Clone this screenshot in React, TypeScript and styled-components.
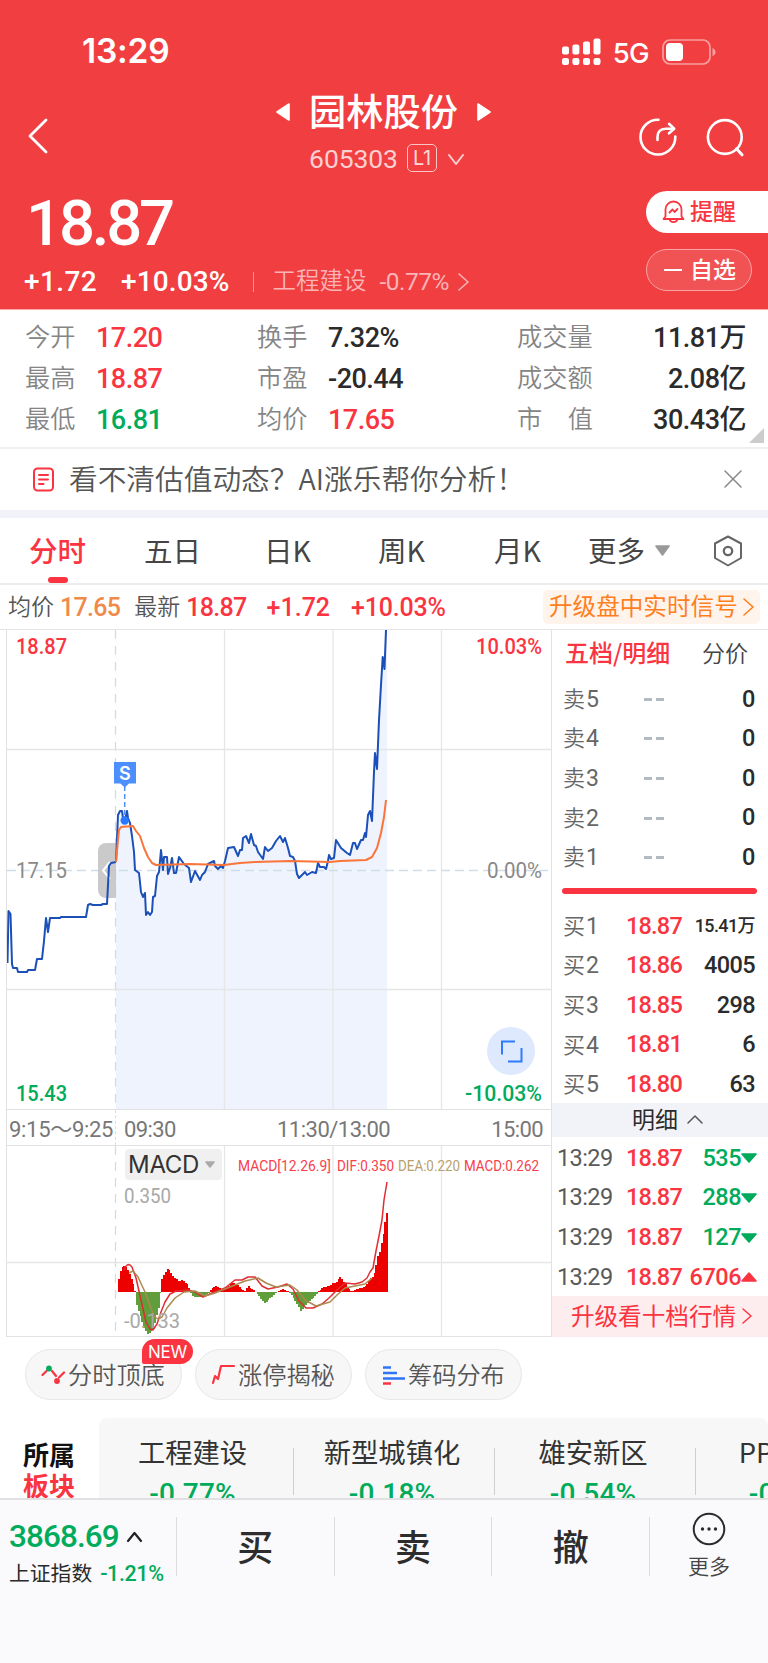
import React from "react";
import styled, { createGlobalStyle } from "styled-components";

const RED = "#fa3441";
const GREEN = "#00ab5b";
const CJK = '"Noto Sans CJK SC", sans-serif';
const DIN = 'Roboto, "Noto Sans CJK SC", sans-serif';

const GlobalStyle = createGlobalStyle`
  *, *::before, *::after { box-sizing: border-box; }
  body { margin: 0; background: #fff; font-family: ${CJK}; }
  svg { display: block; flex: none; }
`;

const Page = styled.div`
  width: 768px;
  height: 1663px;
  overflow: hidden;
  display: flex;
  flex-direction: column;
  background: #fff;
  color: #2b2b2b;
`;

interface TextProps {
  $size: number;
  $color?: string;
  $weight?: number;
  $track?: number;
  $ml?: number;
  $lift?: number;
}

const Num = styled.span<TextProps>`
  font-family: ${DIN};
  font-size: ${(p) => p.$size}px;
  font-weight: ${(p) => p.$weight ?? 500};
  color: ${(p) => p.$color ?? "inherit"};
  letter-spacing: ${(p) => p.$track ?? -0.3}px;
  margin: ${(p) => -(p.$lift ?? 0)}px 0 0 ${(p) => p.$ml ?? 0}px;
  line-height: 1;
  white-space: nowrap;
`;

const Txt = styled.span<TextProps>`
  font-family: ${CJK};
  font-size: ${(p) => p.$size}px;
  font-weight: ${(p) => p.$weight ?? 400};
  color: ${(p) => p.$color ?? "inherit"};
  letter-spacing: ${(p) => p.$track ?? 0}px;
  margin: ${(p) => -(p.$lift ?? 3)}px 0 0 ${(p) => p.$ml ?? 0}px;
  line-height: 1;
  white-space: nowrap;
`;

/* ---------- header ---------- */

const Header = styled.header`
  height: 310px;
  flex: none;
  background: #f03e41;
  border-bottom: 1px solid #f9a9aa;
  color: #fff;
  display: flex;
  flex-direction: column;
`;

const StatusBar = styled.div`
  height: 86px;
  padding: 18px 52px 0 82px;
  display: flex;
  align-items: center;
  font-family: Inter, sans-serif;
`;

const Clock = styled.span`
  font-size: 33.5px;
  font-weight: 600;
  letter-spacing: -0.2px;
  line-height: 1;
  flex: 1;
`;

const Network = styled.span`
  font-size: 27.5px;
  font-weight: 500;
  letter-spacing: -0.6px;
  line-height: 1;
  margin: 3px 13px 0 12px;
`;

const NavBar = styled.div`
  height: 94px;
  padding: 0 24px 0 28px;
  display: flex;
  align-items: flex-start;
`;

const NavSide = styled.div<{ $end?: boolean }>`
  width: 140px;
  padding-top: 32px;
  display: flex;
  gap: 29px;
  justify-content: ${(p) => (p.$end ? "flex-end" : "flex-start")};
`;

const TitleBlock = styled.div`
  flex: 1;
  display: flex;
  flex-direction: column;
  align-items: center;
`;

const TitleRow = styled.div`
  height: 52px;
  margin-left: -5px;
  display: flex;
  align-items: center;
  gap: 19px;
  font-size: 37.2px;
  font-weight: 500;
  line-height: 1;
`;

const TitleText = styled.span`
  margin: -2px 0 0 0;
`;

const CodeRow = styled.div`
  height: 42px;
  padding-left: 2px;
  display: flex;
  align-items: center;
`;

const LevelTag = styled.span`
  width: 30px;
  height: 28px;
  margin: -2px 10px 0 9px;
  border: 1px solid #fbc5c6;
  border-radius: 5px;
  display: flex;
  align-items: center;
  justify-content: center;
  color: #fdd8d9;
  font-family: Inter, sans-serif;
  font-size: 20px;
  letter-spacing: -0.5px;
`;

const QuoteBlock = styled.div`
  flex: 1;
  display: flex;
  justify-content: space-between;
`;

const PriceColumn = styled.div`
  display: flex;
  flex-direction: column;
  padding-left: 24px;
`;

const PriceRow = styled.div`
  height: 79px;
  display: flex;
  align-items: center;
  padding: 9px 0 0 2px;
`;

const ChangeRow = styled.div`
  height: 46px;
  display: flex;
  align-items: center;
`;

const Divider = styled.i`
  width: 1px;
  height: 20px;
  margin-left: 24px;
  background: #f79496;
`;

const ArrowSlot = styled.span<{ $gap: number }>`
  margin-left: ${(p) => p.$gap}px;
`;

const Actions = styled.div`
  width: 122px;
  padding-top: 11px;
  display: flex;
  flex-direction: column;
  gap: 16px;
`;

const RemindButton = styled.button`
  height: 42px;
  padding: 0 0 0 16px;
  border: 0;
  border-radius: 21px 0 0 21px;
  background: #fff;
  display: flex;
  align-items: center;
  gap: 5px;
`;

const WatchButton = styled.button`
  width: 106px;
  height: 42px;
  padding: 0 0 0 17px;
  border: 1px solid #f8a3a5;
  border-radius: 21px;
  background: #f15254;
  display: flex;
  align-items: center;
  gap: 8px;
`;

/* ---------- key figures ---------- */

const Figures = styled.section`
  height: 139px;
  flex: none;
  position: relative;
  padding: 6px 22px 0 25px;
  border-bottom: 2px solid #efefef;
  display: grid;
  grid-template-columns: 232px 260px 1fr;
  grid-auto-rows: 41.4px;
`;

const Figure = styled.div<{ $spread?: boolean }>`
  display: flex;
  align-items: center;
  justify-content: ${(p) => (p.$spread ? "space-between" : "flex-start")};
`;

const FigureLabel = styled.span<{ $wide?: boolean }>`
  display: flex;
  justify-content: space-between;
  width: ${(p) => (p.$wide ? "76px" : "71px")};
  font-size: 25.2px;
  font-weight: 350;
  line-height: 1;
  color: #858585;
  margin-top: -3px;
`;

const FoldCorner = styled.i`
  position: absolute;
  right: 4px;
  bottom: 4px;
  border-left: 15px solid transparent;
  border-bottom: 15px solid #ccc;
`;

/* ---------- banner and tabs ---------- */

const Banner = styled.section`
  height: 61px;
  flex: none;
  padding: 0 26px 0 33px;
  display: flex;
  align-items: center;
`;

const CloseButton = styled.button`
  margin: -1px 0 0 auto;
  padding: 0;
  border: 0;
  background: none;
`;

const Gap = styled.div`
  height: 8px;
  flex: none;
  background: #f2f3f9;
`;

const Tabs = styled.nav`
  height: 67px;
  flex: none;
  border-bottom: 2px solid #ececec;
  padding: 0 24px 0 29px;
  display: flex;
`;

const Tab = styled.div<{ $w: number; $active?: boolean }>`
  width: ${(p) => p.$w}px;
  height: 65px;
  position: relative;
  display: flex;
  align-items: center;
  gap: 10px;
  font-size: 28.5px;
  line-height: 1;
  font-weight: ${(p) => (p.$active ? 500 : 400)};
  color: ${(p) => (p.$active ? RED : "#454545")};
  ${(p) =>
    p.$active &&
    `&::after { content: ""; position: absolute; left: 19px; bottom: 0; width: 20px; height: 6px; border-radius: 3px; background: ${RED}; }`}
`;

const InfoRow = styled.div`
  height: 44px;
  flex: none;
  padding: 0 8px 0 8px;
  display: flex;
  align-items: center;
`;

const SignalLink = styled.a`
  margin-left: auto;
  width: 217px;
  height: 34px;
  margin-top: -1px;
  padding-left: 6px;
  border-radius: 5px;
  background: #fff4eb;
  display: flex;
  align-items: center;
  gap: 4px;
`;

/* ---------- charts and book ---------- */

const Main = styled.section`
  height: 708px;
  flex: none;
  display: flex;
  border-top: 1px solid #e4e4e4;
`;

const Charts = styled.div`
  width: 546px;
  margin-left: 6px;
  display: flex;
  flex-direction: column;
  border: 1px solid #e2e2e2;
  border-top: 0;
`;

const Plot = styled.div<{ $h: number }>`
  position: relative;
  height: ${(p) => p.$h}px;
`;

const ExpandButton = styled.button`
  position: absolute;
  right: 16px;
  top: 397px;
  width: 48px;
  height: 48px;
  padding: 0;
  border: 0;
  border-radius: 50%;
  background: #dfe9fd;
  display: flex;
  align-items: center;
  justify-content: center;
`;

const TimeAxis = styled.div`
  height: 37px;
  border-top: 1px solid #e2e2e2;
  border-bottom: 1px solid #e2e2e2;
  display: grid;
  grid-template-columns: 109px 153px 1fr 80px;
  align-items: center;
`;

const TimeLabel = styled(Num)<{ $align?: string; $first?: boolean }>`
  text-align: ${(p) => p.$align ?? "left"};
  height: 35px;
  line-height: 37px;
  padding: 1px 8px 0 ${(p) => (p.$first ? "2px" : "8px")};
  ${(p) => p.$first && "border-right: 1px dashed #dcdcdc; padding-right: 0;"}
`;

const MacdHeader = styled.div`
  position: absolute;
  left: 118px;
  top: 3px;
  height: 31px;
  display: flex;
  align-items: center;
`;

const Selector = styled.span`
  width: 97px;
  height: 31px;
  padding-left: 3px;
  border-radius: 4px;
  background: #f0f0f0;
  display: flex;
  align-items: center;
  gap: 6px;
  font-family: Inter, sans-serif;
  font-size: 24px;
  letter-spacing: -0.3px;
  color: #333;
`;

const Book = styled.div`
  flex: 1;
  display: flex;
  flex-direction: column;
`;

const BookTabs = styled.div`
  height: 49px;
  padding: 0 20px 0 13px;
  display: flex;
  align-items: center;
  justify-content: space-between;
`;

const BookRow = styled.div`
  height: 39.6px;
  padding: 1px 13px 0 12px;
  display: grid;
  grid-template-columns: 62px 56px 1fr;
  align-items: center;
`;

const BookLabel = styled.span`
  font-size: 22px;
  font-weight: 350;
  line-height: 1;
  color: #666;
  margin: -2px 0 0 -1px;
  & b { font: 400 23px/1 ${DIN}; margin-left: 1px; }
`;

const Quantity = styled(Num)`
  text-align: right;
`;

const Dashes = styled.span`
  display: flex;
  justify-content: center;
  gap: 4px;
  padding-right: 1px;
  &::before, &::after { content: ""; width: 8px; height: 3px; background: #b3bac4; }
`;

const SplitBar = styled.div`
  height: 6px;
  margin: 11px 11px 12px 10px;
  border-radius: 3px;
  background: ${RED};
`;

const DetailBar = styled.div`
  height: 34px;
  margin-top: -1px;
  padding-left: 16px;
  background: #f2f3f9;
  display: flex;
  align-items: center;
  justify-content: center;
  gap: 8px;
`;

const TradeRow = styled.div`
  height: 39.7px;
  padding: 3px 11px 0 5px;
  display: grid;
  grid-template-columns: 69px 56px 1fr 16px;
  align-items: center;
`;

const UpgradeLink = styled.a`
  height: 41px;
  padding-left: 4px;
  background: #feedef;
  display: flex;
  align-items: center;
  justify-content: center;
  gap: 5px;
`;

/* ---------- lower area ---------- */

const Chips = styled.div`
  height: 81px;
  flex: none;
  padding: 12px 25px 0;
  display: flex;
  gap: 13px;
`;

const Chip = styled.button`
  position: relative;
  width: 157px;
  height: 51px;
  padding: 0 0 0 15px;
  border: 1px solid #e7e7e7;
  border-radius: 26px;
  background: #f7f7f7;
  display: flex;
  align-items: center;
  gap: 2px;
`;

const NewBadge = styled.span`
  position: absolute;
  left: 116px;
  top: -11px;
  width: 51px;
  height: 25px;
  border-radius: 13px 13px 13px 2px;
  background: ${RED};
  color: #fff;
  font: 400 17px/27px Inter, sans-serif;
  letter-spacing: -0.3px;
  text-align: center;
`;

const Sectors = styled.section`
  height: 80px;
  flex: none;
  overflow: hidden;
  display: flex;
`;

const SectorTitle = styled.div`
  width: 99px;
  padding: 21px 0 0 23px;
  font-size: 26px;
  line-height: 30.5px;
  font-weight: 700;
  color: #111;
  flex: none;
  & em { display: block; font-style: normal; color: ${RED}; }
`;

const SectorStrip = styled.div`
  flex: 1;
  overflow: hidden;
  height: 110px;
  background: #f7f7f7;
  border-radius: 8px;
  display: flex;
`;

const Sector = styled.div`
  width: 201px;
  flex: none;
  position: relative;
  padding: 23px 5px 0 0;
  display: flex;
  flex-direction: column;
  align-items: center;
  gap: 15px;
  &:first-child { width: 195px; padding-right: 8px; }
  &:last-child { padding-right: 9px; }
  &::after { content: ""; position: absolute; right: 0; top: 30px; width: 1px; height: 47px; background: #cfcfcf; }
`;

const Footer = styled.footer`
  flex: 1;
  border-top: 2px solid #e1e1e4;
  background: #fafafc;
  display: flex;
  align-items: flex-start;
`;

const IndexBlock = styled.div`
  width: 176px;
  padding: 21px 0 0 9px;
  display: flex;
  flex-direction: column;
  gap: 10px;
`;

const Inline = styled.div`
  display: flex;
  align-items: center;
`;

const Trade = styled.button`
  width: 157.7px;
  height: 59px;
  margin-top: 17px;
  padding: 0 0 4px;
  border: 0;
  border-left: 1px solid #dcdce0;
  background: none;
  color: #2d2d2d;
  font: 500 36px/1 ${CJK};
`;

const More = styled.div`
  flex: 1;
  height: 59px;
  margin-top: 17px;
  border-left: 1px solid #dcdce0;
  display: flex;
  flex-direction: column;
  align-items: center;
  gap: 12px;
`;

const MoreIcon = styled.svg`
  margin-top: -5px;
`;

/* ---------- drawings ---------- */

type Dir = "left" | "right" | "up" | "down";

const Chevron = ({ w, h, dir, color, sw = 2 }: { w: number; h: number; dir: Dir; color: string; sw?: number }) => {
  const pts: Record<Dir, string> = {
    left: `${w - 2},2 2,${h / 2} ${w - 2},${h - 2}`,
    right: `2,2 ${w - 2},${h / 2} 2,${h - 2}`,
    up: `2,${h - 2} ${w / 2},2 ${w - 2},${h - 2}`,
    down: `2,2 ${w / 2},${h - 2} ${w - 2},2`,
  };
  return (
    <svg width={w} height={h} fill="none" stroke={color} strokeWidth={sw} strokeLinecap="round" strokeLinejoin="round">
      <polyline points={pts[dir]} />
    </svg>
  );
};

const Triangle = ({ w, h, dir, color }: { w: number; h: number; dir: Dir; color: string }) => {
  const pts: Record<Dir, string> = {
    left: `${w - 1},1 1,${h / 2} ${w - 1},${h - 1}`,
    right: `1,1 ${w - 1},${h / 2} 1,${h - 1}`,
    up: `1,${h - 1} ${w / 2},1 ${w - 1},${h - 1}`,
    down: `1,1 ${w / 2},${h - 1} ${w - 1},1`,
  };
  return (
    <svg width={w} height={h} fill={color} stroke={color} strokeWidth={1.6} strokeLinejoin="round">
      <polygon points={pts[dir]} />
    </svg>
  );
};

const Signal = () => (
  <svg width="39" height="28" fill="#fff">
    {[0, 10.4, 21, 31.5].map((x, i) => (
      <g key={x}>
        <rect x={x} y={[8.5, 6.5, 3.5, 0.5][i]} width="7" height={[8, 10, 13, 16][i]} rx="2" />
        <rect x={x} y="20" width="7" height="7" rx="2.2" />
      </g>
    ))}
  </svg>
);

const Battery = () => (
  <svg width="54" height="27" fill="none">
    <rect x="1" y="1" width="47" height="24" rx="7" stroke="#f99fa0" strokeWidth="1.7" />
    <rect x="4" y="4" width="17" height="18" rx="4" fill="#fff" />
    <path d="M50.5 9c4 1.5 4 7 0 8z" fill="#f99fa0" />
  </svg>
);

const ShareIcon = () => (
  <svg width="38" height="38" fill="none" stroke="#fff" strokeWidth="2.6" strokeLinecap="round" strokeLinejoin="round">
    <path d="M19.5 1.7A17.4 17.4 0 1 0 36.3 18.5" />
    <path d="M18.5 22v-3c0-5 3-8.3 8-8.3h8" />
    <path d="M30 5.8l5.2 4.9L30 15.3" />
  </svg>
);

const SearchIcon = () => (
  <svg width="38" height="39" fill="none" stroke="#fff" strokeWidth="2.6" strokeLinecap="round">
    <circle cx="18.8" cy="19" r="16.9" />
    <path d="M30.5 30.8l5.5 6" strokeWidth="3" />
  </svg>
);

const BellIcon = () => (
  <svg width="23" height="24" fill="none" stroke={RED} strokeWidth="1.8" strokeLinecap="round" strokeLinejoin="round">
    <path d="M3.5 16.5V9.5a8 8 0 0 1 16 0v7l2 2.5H1.5z" />
    <path d="M7.5 19.5c1.5 3.5 6.5 3.5 8 0" />
    <path d="M7.5 12.5l3-3 2 2.5 3-3" />
  </svg>
);

const NoteIcon = () => (
  <svg width="21" height="25" fill="none" stroke={RED} strokeWidth="2" strokeLinecap="round">
    <rect x="1" y="1.5" width="19" height="22" rx="3.5" />
    <path d="M6 8h9M6 12.5h9M6 17h4.5" />
  </svg>
);

const CloseIcon = () => (
  <svg width="18" height="18" stroke="#888" strokeWidth="1.5" strokeLinecap="round">
    <path d="M1 1l16 16M17 1L1 17" />
  </svg>
);

const HexIcon = () => (
  <svg width="30" height="32" fill="none" stroke="#666" strokeWidth="2" strokeLinejoin="round">
    <path d="M15 1.5L28 8.5v14.5L15 30.5 2 23V8.5z" />
    <circle cx="15" cy="16" r="4.2" strokeWidth="2.3" />
  </svg>
);

const TopBottomIcon = () => (
  <svg width="25" height="22" fill="none" stroke={RED} strokeWidth="2.2" strokeLinecap="round">
    <path d="M1.5 11l4-4M11 7l4 5M18 13.5l5-5" />
    <circle cx="8" cy="4.5" r="2.9" fill={GREEN} stroke="none" />
    <circle cx="16" cy="17" r="2.9" fill={RED} stroke="none" />
  </svg>
);

const LimitIcon = () => (
  <svg width="25" height="22" fill="none" stroke={RED} strokeWidth="2.2" strokeLinejoin="round" strokeLinecap="round">
    <path d="M2 19l2-7 3 3 3-13h13" />
  </svg>
);

const HoldingsIcon = () => (
  <svg width="25" height="20" strokeWidth="2.5">
    <path d="M2 2.5h8M2 8h14M2 13.5h22" stroke="#2f74f5" />
    <path d="M2 18.5h8" stroke={RED} />
  </svg>
);

/* ---------- chart data ---------- */

const OPENING =
  "7.5,963 8.5,911 10.5,914 12,964 13,968 17,968 18,972 27,972 28,970 35,970 37,959 42,959 44,941 46,918 48,932 50,918 60,918 61,917 86,917 88,905 90,904 93,905 101,905 103,904 107,904 109,866 111,863 116,862";
const PRICE =
  "116,862 118,815 120,811 122,811 123,818 125,820 127,811 128,818 130,823 132,836 134,852 135,870 139,873 141,892 143,897 145,893 146,915 148,912 150,915 152,912 153,897 155,896 157,876 159,872 161,850 163,870 164,857 167,857 168,874 170,868 172,858 174,873 176,873 179,857 184,864 189,868 191,882 195,871 200,880 202,875 205,872 208,864 214,861 215,866 218,869 221,866 223,868 225,861 228,848 234,847 238,856 240,850 242,850 243,838 246,836 249,843 251,834 254,845 256,846 258,852 263,859 265,847 268,851 272,848 276,841 280,836 283,842 285,838 288,848 290,856 293,857 295,861 297,874 299,878 305,872 307,875 312,872 316,873 318,863 320,867 324,867 326,869 328,861 329,855 331,859 334,858 336,840 341,848 347,853 350,855 353,843 355,843 357,849 361,840 363,840 365,833 366,837 368,815 370,811 372,821 374,772 375,753 377,769 379,720 381,685 382.7,657 384.5,669 386,630";
const AVERAGE =
  "116,862 118,840 119,830 121,827 133,826 136,831 140,836 144,848 148,857 152,863 156,865 190,864 224,865 240,863 255,862 290,861 330,862 340,861 366,860 372,857 377,848 381,833 384,817 386,800";
const DIF =
  "124,1270 126,1266 128,1264.5 130,1265 132,1267 136,1278 141,1300 146,1322 150,1329 153,1330 157,1324 161,1312 165,1302 170,1294 176,1291 188,1290 195,1292 203,1297 212,1293 225,1288 235,1280 242,1280 248,1277 255,1277 262,1286 268,1289 278,1287 287,1284 293,1289 299,1301 306,1308 313,1308 322,1304 329,1298 337,1290 345,1283 355,1284 362,1282 367,1278 370,1272 373,1268 376,1251 379,1236 382,1220 384,1200 387,1182";
const DEA =
  "129,1273 133,1271 138,1277 145,1292 152,1311 155,1317 158,1319 162,1317 167,1308 175,1298 184,1292 195,1291 205,1296 215,1293 235,1285 245,1281 258,1278 266,1283 276,1287 290,1285 297,1290 305,1300 316,1306 330,1302 337,1295 345,1288 355,1286 365,1284 372,1278";
const ENVELOPE: [number, number][] = [
  [118, 13], [120, 22], [122, 26], [125, 25], [127, 22], [130, 15], [133, 6], [134.5, 0], [135, -8], [137, -17],
  [140, -25], [143, -36], [147, -42], [150, -40], [153, -36], [155, -26], [158, -14], [159.5, 0], [160, 8], [162, 16],
  [165, 20], [167, 24], [170, 19], [174, 14], [178, 11], [182, 12], [187, 7], [190, 0], [192, -4], [195, -5],
  [205, -4], [208, 0], [211, 4], [216, 6], [222, 2], [226, 5], [231, 9], [236, 8], [240, 3], [244, 1],
  [247, 6], [250, 4], [255, 0], [258, -4], [264, -11], [272, -4], [276, 0], [281, 3], [286, 1], [289, 0],
  [294, -8], [300, -19], [308, -10], [317, -1], [318, 1], [323, 5], [329, 6], [332, 9], [336, 10], [339, 16],
  [344, 9], [348, 3], [351, 0.5], [355, 3], [361, 4], [366, 7], [370, 14], [373, 16], [375, 25], [377, 36],
  [379, 40], [381, 50], [383, 60], [385, 74], [387, 82],
];

const heightAt = (x: number) => {
  const i = ENVELOPE.findIndex(([px]) => px >= x);
  if (i <= 0) return ENVELOPE[0][1];
  const [x0, y0] = ENVELOPE[i - 1];
  const [x1, y1] = ENVELOPE[i];
  return y0 + ((y1 - y0) * (x - x0)) / (x1 - x0);
};

const BARS = Array.from({ length: 150 }, (_, i) => 118 + i * 1.8).map((x) => ({ x, v: heightAt(x) }));

interface AxisTextProps {
  x: number;
  y: number;
  w: number;
  size: number;
  color: string;
  weight?: number;
  children: string;
}

const AxisText = ({ x, y, w, size, color, weight = 400, children }: AxisTextProps) => (
  <text x={x} y={y} fontFamily="Roboto" fontSize={size} fontWeight={weight} fill={color} textLength={w} lengthAdjust="spacingAndGlyphs">
    {children}
  </text>
);

const Grid = ({ top, bottom }: { top: number; bottom: number }) => (
  <g stroke="#e6e6e6" strokeWidth="1.3">
    <line x1="115.5" x2="115.5" y1={top} y2={bottom} strokeDasharray="9 7" stroke="#dadada" />
    {[224.5, 333, 441.5].map((x) => (
      <line key={x} x1={x} x2={x} y1={top} y2={bottom} />
    ))}
  </g>
);

const PriceChart = () => (
  <svg width="544" height="479" viewBox="7 630 544 479">
    <polygon points={`116,1109 ${PRICE} 387,630 387,1109`} fill="#eef3fe" />
    <Grid top={630} bottom={1109} />
    <g stroke="#e6e6e6" strokeWidth="1.3">
      <line x1="7" x2="551" y1="749.5" y2="749.5" />
      <line x1="7" x2="551" y1="989.5" y2="989.5" />
    </g>
    <line x1="7" x2="551" y1="870.5" y2="870.5" stroke="#cfdde8" strokeWidth="1.5" strokeDasharray="9 5" />
    <path d="M116 843h-10a8 8 0 0 0-8 8v39a8 8 0 0 0 8 8h10z" fill="#c4c4c4" opacity="0.9" />
    <polyline points="110,862 103,870.5 110,879" fill="none" stroke="#fff" strokeWidth="2" />
    <g fill="none" strokeWidth="2" strokeLinejoin="round">
      <polyline points={OPENING} stroke="#1a50b8" />
      <polyline points={PRICE} stroke="#1a50b8" />
      <polyline points={AVERAGE} stroke="#fb743a" />
    </g>
    <line x1="124.7" x2="124.7" y1="786" y2="815" stroke="#4d8fff" strokeWidth="1.5" strokeDasharray="5 3" />
    <path d="M114 762h22v21.5h-7l-4.3 4-4.3-4H114z" fill="#4d8fff" />
    <circle cx="124.7" cy="820.5" r="4.2" fill="#2879ff" />
    <text x="124.9" y="779.5" textAnchor="middle" fontFamily="Inter" fontSize="18" fontWeight="600" fill="#fff">S</text>
    <AxisText x={16} y={654} w={51} size={22} color={RED} weight={500}>18.87</AxisText>
    <AxisText x={476} y={654} w={66} size={22} color={RED} weight={500}>10.03%</AxisText>
    <AxisText x={16} y={878} w={51} size={22} color="#8a8a8a">17.15</AxisText>
    <AxisText x={487} y={878} w={55} size={22} color="#8a8a8a">0.00%</AxisText>
    <AxisText x={16} y={1101} w={51} size={22} color={GREEN} weight={500}>15.43</AxisText>
    <AxisText x={465} y={1101} w={77} size={22} color={GREEN} weight={500}>-10.03%</AxisText>
  </svg>
);

const MacdChart = () => (
  <svg width="544" height="190" viewBox="7 1146 544 190">
    <Grid top={1146} bottom={1336} />
    <line x1="7" x2="551" y1="1262.5" y2="1262.5" stroke="#e6e6e6" strokeWidth="1.3" />
    <g shapeRendering="crispEdges">
      {BARS.map(({ x, v }) => (
        <rect key={x} x={x} width="2" y={v > 0 ? 1292 - v : 1292} height={Math.max(Math.abs(v), 0.5)} fill={v > 0 ? "#ec0000" : "#5f9e3a"} />
      ))}
    </g>
    <g fill="none" strokeWidth="1.5" strokeLinejoin="round">
      <polyline points={DIF} stroke="#e02c33" />
      <polyline points={DEA} stroke="#ab8a50" />
    </g>
    <AxisText x={124} y={1202.5} w={47} size={20} color="#a8a8a8">0.350</AxisText>
    <AxisText x={124} y={1328} w={56} size={20} color="#a8a8a8">-0.133</AxisText>
    <AxisText x={238} y={1171} w={93} size={14.5} color="#f8404c">MACD[12.26.9]</AxisText>
    <AxisText x={337} y={1171} w={57} size={14.5} color="#f8404c">DIF:0.350</AxisText>
    <AxisText x={398} y={1171} w={62} size={14.5} color="#b89f6c">DEA:0.220</AxisText>
    <AxisText x={464} y={1171} w={75} size={14.5} color="#f8404c">MACD:0.262</AxisText>
  </svg>
);

/* ---------- content ---------- */

const FIGURES: { label: string; value: string; color?: string }[] = [
  { label: "今开", value: "17.20", color: RED },
  { label: "换手", value: "7.32%" },
  { label: "成交量", value: "11.81万" },
  { label: "最高", value: "18.87", color: RED },
  { label: "市盈", value: "-20.44" },
  { label: "成交额", value: "2.08亿" },
  { label: "最低", value: "16.81", color: GREEN },
  { label: "均价", value: "17.65", color: RED },
  { label: "市值", value: "30.43亿" },
];

const BIDS = [
  ["1", "18.87", "15.41万"],
  ["2", "18.86", "4005"],
  ["3", "18.85", "298"],
  ["4", "18.81", "6"],
  ["5", "18.80", "63"],
];

const TRADES: [string, boolean][] = [
  ["535", false],
  ["288", false],
  ["127", false],
  ["6706", true],
];

const SECTORS = [
  ["工程建设", "-0.77%"],
  ["新型城镇化", "-0.18%"],
  ["雄安新区", "-0.54%"],
  ["PPP概念", "-0.66%"],
];

export default function App() {
  return (
    <Page>
      <GlobalStyle />
      <Header>
        <StatusBar>
          <Clock>13:29</Clock>
          <Signal />
          <Network>5G</Network>
          <Battery />
        </StatusBar>
        <NavBar>
          <NavSide>
            <Chevron w={20} h={36} dir="left" color="#fff" sw={2.8} />
          </NavSide>
          <TitleBlock>
            <TitleRow>
              <Triangle w={14} h={18} dir="left" color="#fff" />
              <TitleText>园林股份</TitleText>
              <Triangle w={14} h={18} dir="right" color="#fff" />
            </TitleRow>
            <CodeRow>
              <Num $size={26.5} $weight={400} $color="#fcd0d1" $track={-0.1}>605303</Num>
              <LevelTag>L1</LevelTag>
              <Chevron w={18} h={13} dir="down" color="#fcd0d1" />
            </CodeRow>
          </TitleBlock>
          <NavSide $end>
            <ShareIcon />
            <SearchIcon />
          </NavSide>
        </NavBar>
        <QuoteBlock>
          <PriceColumn>
            <PriceRow>
              <Num $size={63.5} $track={-3.2}>18.87</Num>
            </PriceRow>
            <ChangeRow>
              <Num $size={28} $track={0.4}>+1.72</Num>
              <Num $size={28} $ml={24} $track={0.1}>+10.03%</Num>
              <Divider />
              <Txt $size={23.5} $weight={350} $color="#fab4b5" $ml={18} $lift={4}>工程建设</Txt>
              <Num $size={24.5} $weight={400} $color="#fab4b5" $ml={13} $track={-0.5}>-0.77%</Num>
              <ArrowSlot $gap={8}>
                <Chevron w={13} h={20} dir="right" color="#fab4b5" sw={1.6} />
              </ArrowSlot>
            </ChangeRow>
          </PriceColumn>
          <Actions>
            <RemindButton>
              <BellIcon />
              <Txt $size={23} $weight={500} $color={RED}>提醒</Txt>
            </RemindButton>
            <WatchButton>
              <svg width="18" height="2"><rect width="18" height="2" fill="#fff" /></svg>
              <Txt $size={23} $weight={500} $color="#fff">自选</Txt>
            </WatchButton>
          </Actions>
        </QuoteBlock>
      </Header>

      <Figures>
        {FIGURES.map((f, i) => (
          <Figure key={f.label} $spread={i % 3 === 2}>
            <FigureLabel $wide={i % 3 === 2}>
              {f.label === "市值" ? (
                <>
                  <span>市</span>
                  <span>值</span>
                </>
              ) : (
                f.label
              )}
            </FigureLabel>
            <Num $size={27} $track={-0.5} $lift={-3} $color={f.color ?? "#2b2b2b"}>{f.value}</Num>
          </Figure>
        ))}
        <FoldCorner />
      </Figures>

      <Banner>
        <NoteIcon />
        <Txt $size={28.7} $weight={350} $color="#555" $ml={15} $lift={2}>看不清估值动态？AI涨乐帮你分析！</Txt>
        <CloseButton>
          <CloseIcon />
        </CloseButton>
      </Banner>
      <Gap />

      <Tabs>
        <Tab $w={115} $active>分时</Tab>
        <Tab $w={120}>五日</Tab>
        <Tab $w={114}>日K</Tab>
        <Tab $w={116}>周K</Tab>
        <Tab $w={94}>月K</Tab>
        <Tab $w={125}>
          更多
          <Triangle w={15} h={11} dir="down" color="#999" />
        </Tab>
        <Tab $w={30}>
          <HexIcon />
        </Tab>
      </Tabs>

      <InfoRow>
        <Txt $size={23} $weight={350} $color="#555">均价</Txt>
        <Num $size={25} $track={-0.7} $color="#f08a4b" $ml={6} $lift={-1}>17.65</Num>
        <Txt $size={23} $weight={350} $color="#555" $ml={14}>最新</Txt>
        <Num $size={25} $track={-0.7} $color={RED} $ml={6} $lift={-1}>18.87</Num>
        <Num $size={25} $track={0} $color={RED} $ml={20} $lift={-1}>+1.72</Num>
        <Num $size={25} $track={-0.2} $color={RED} $ml={21} $lift={-1}>+10.03%</Num>
        <SignalLink>
          <Txt $size={23.6} $color="#ff7f1f" $lift={1}>升级盘中实时信号</Txt>
          <Chevron w={13} h={20} dir="right" color="#ff7f1f" sw={1.6} />
        </SignalLink>
      </InfoRow>

      <Main>
        <Charts>
          <Plot $h={479}>
            <PriceChart />
            <ExpandButton>
              <svg width="23" height="23" fill="none" stroke="#2f7bff" strokeWidth="2">
                <path d="M15 1.5H2v13M8 21.5h13.5V8" />
              </svg>
            </ExpandButton>
          </Plot>
          <TimeAxis>
            <TimeLabel $size={22} $weight={400} $color="#777" $track={-0.3} $first>9:15～9:25</TimeLabel>
            <TimeLabel $size={22} $weight={400} $color="#777" $track={-0.6}>09:30</TimeLabel>
            <TimeLabel $size={22} $weight={400} $color="#777" $track={-0.5}>11:30/13:00</TimeLabel>
            <TimeLabel $size={22} $weight={400} $color="#777" $track={-0.6} $align="right">15:00</TimeLabel>
          </TimeAxis>
          <Plot $h={190}>
            <MacdChart />
            <MacdHeader>
              <Selector>
                MACD
                <Triangle w={10} h={7} dir="down" color="#aaa" />
              </Selector>
            </MacdHeader>
          </Plot>
        </Charts>

        <Book>
          <BookTabs>
            <Txt $size={24} $weight={500} $color={RED} $lift={5}>五档/明细</Txt>
            <Txt $size={23} $weight={350} $color="#444" $lift={5}>分价</Txt>
          </BookTabs>
          {["5", "4", "3", "2", "1"].map((n) => (
            <BookRow key={n}>
              <BookLabel>卖<b>{n}</b></BookLabel>
              <Dashes />
              <Quantity $size={23.5}>0</Quantity>
            </BookRow>
          ))}
          <SplitBar />
          {BIDS.map(([n, price, qty]) => (
            <BookRow key={n}>
              <BookLabel>买<b>{n}</b></BookLabel>
              <Num $size={23.5} $track={-0.8} $color={RED}>{price}</Num>
              <Quantity $size={qty.length > 5 ? 18 : 23.5} $track={-0.6}>{qty}</Quantity>
            </BookRow>
          ))}
          <DetailBar>
            <Txt $size={23} $lift={2}>明细</Txt>
            <Chevron w={18} h={11} dir="up" color="#555" sw={1.5} />
          </DetailBar>
          {TRADES.map(([qty, up]) => (
            <TradeRow key={qty}>
              <Num $size={23.5} $track={-0.6} $weight={400} $color="#5a5a5a">13:29</Num>
              <Num $size={23.5} $track={-0.8} $color={RED}>18.87</Num>
              <Quantity $size={23.5} $track={-0.5} $color={up ? RED : GREEN}>{qty}</Quantity>
              <Triangle w={16} h={10} dir={up ? "up" : "down"} color={up ? RED : GREEN} />
            </TradeRow>
          ))}
          <UpgradeLink>
            <Txt $size={23.6} $color={RED} $lift={1}>升级看十档行情</Txt>
            <Chevron w={12} h={18} dir="right" color={RED} sw={1.5} />
          </UpgradeLink>
        </Book>
      </Main>

      <Chips>
        <Chip>
          <TopBottomIcon />
          <Txt $size={24.2} $weight={350} $color="#555" $lift={1}>分时顶底</Txt>
          <NewBadge>NEW</NewBadge>
        </Chip>
        <Chip>
          <LimitIcon />
          <Txt $size={24.2} $weight={350} $color="#555" $lift={1}>涨停揭秘</Txt>
        </Chip>
        <Chip>
          <HoldingsIcon />
          <Txt $size={24.2} $weight={350} $color="#555" $lift={1}>筹码分布</Txt>
        </Chip>
      </Chips>

      <Sectors>
        <SectorTitle>
          所属<em>板块</em>
        </SectorTitle>
        <SectorStrip>
          {SECTORS.map(([name, pct]) => (
            <Sector key={name}>
              <Txt $size={27.3} $color="#333">{name}</Txt>
              <Num $size={28} $track={0.1} $color={GREEN}>{pct}</Num>
            </Sector>
          ))}
        </SectorStrip>
      </Sectors>

      <Footer>
        <IndexBlock>
          <Inline>
            <Num $size={31.5} $track={-0.9} $color={GREEN}>3868.69</Num>
            <ArrowSlot $gap={7}>
              <Chevron w={17} h={12} dir="up" color="#222" sw={2.2} />
            </ArrowSlot>
          </Inline>
          <Inline>
            <Txt $size={20.8} $lift={2}>上证指数</Txt>
            <Num $size={21.5} $track={-0.4} $color={GREEN} $ml={8} $lift={0}>-1.21%</Num>
          </Inline>
        </IndexBlock>
        <Trade>买</Trade>
        <Trade>卖</Trade>
        <Trade>撤</Trade>
        <More>
          <MoreIcon width="34" height="34" viewBox="0 0 34 34" fill="none">
            <circle cx="17" cy="17" r="15.3" stroke="#2b2b2b" strokeWidth="2" />
            <g fill="#2b2b2b">
              <circle cx="10.5" cy="17" r="1.7" />
              <circle cx="17" cy="17" r="1.7" />
              <circle cx="23.5" cy="17" r="1.7" />
            </g>
          </MoreIcon>
          <Txt $size={21} $weight={350} $color="#444">更多</Txt>
        </More>
      </Footer>
    </Page>
  );
}
